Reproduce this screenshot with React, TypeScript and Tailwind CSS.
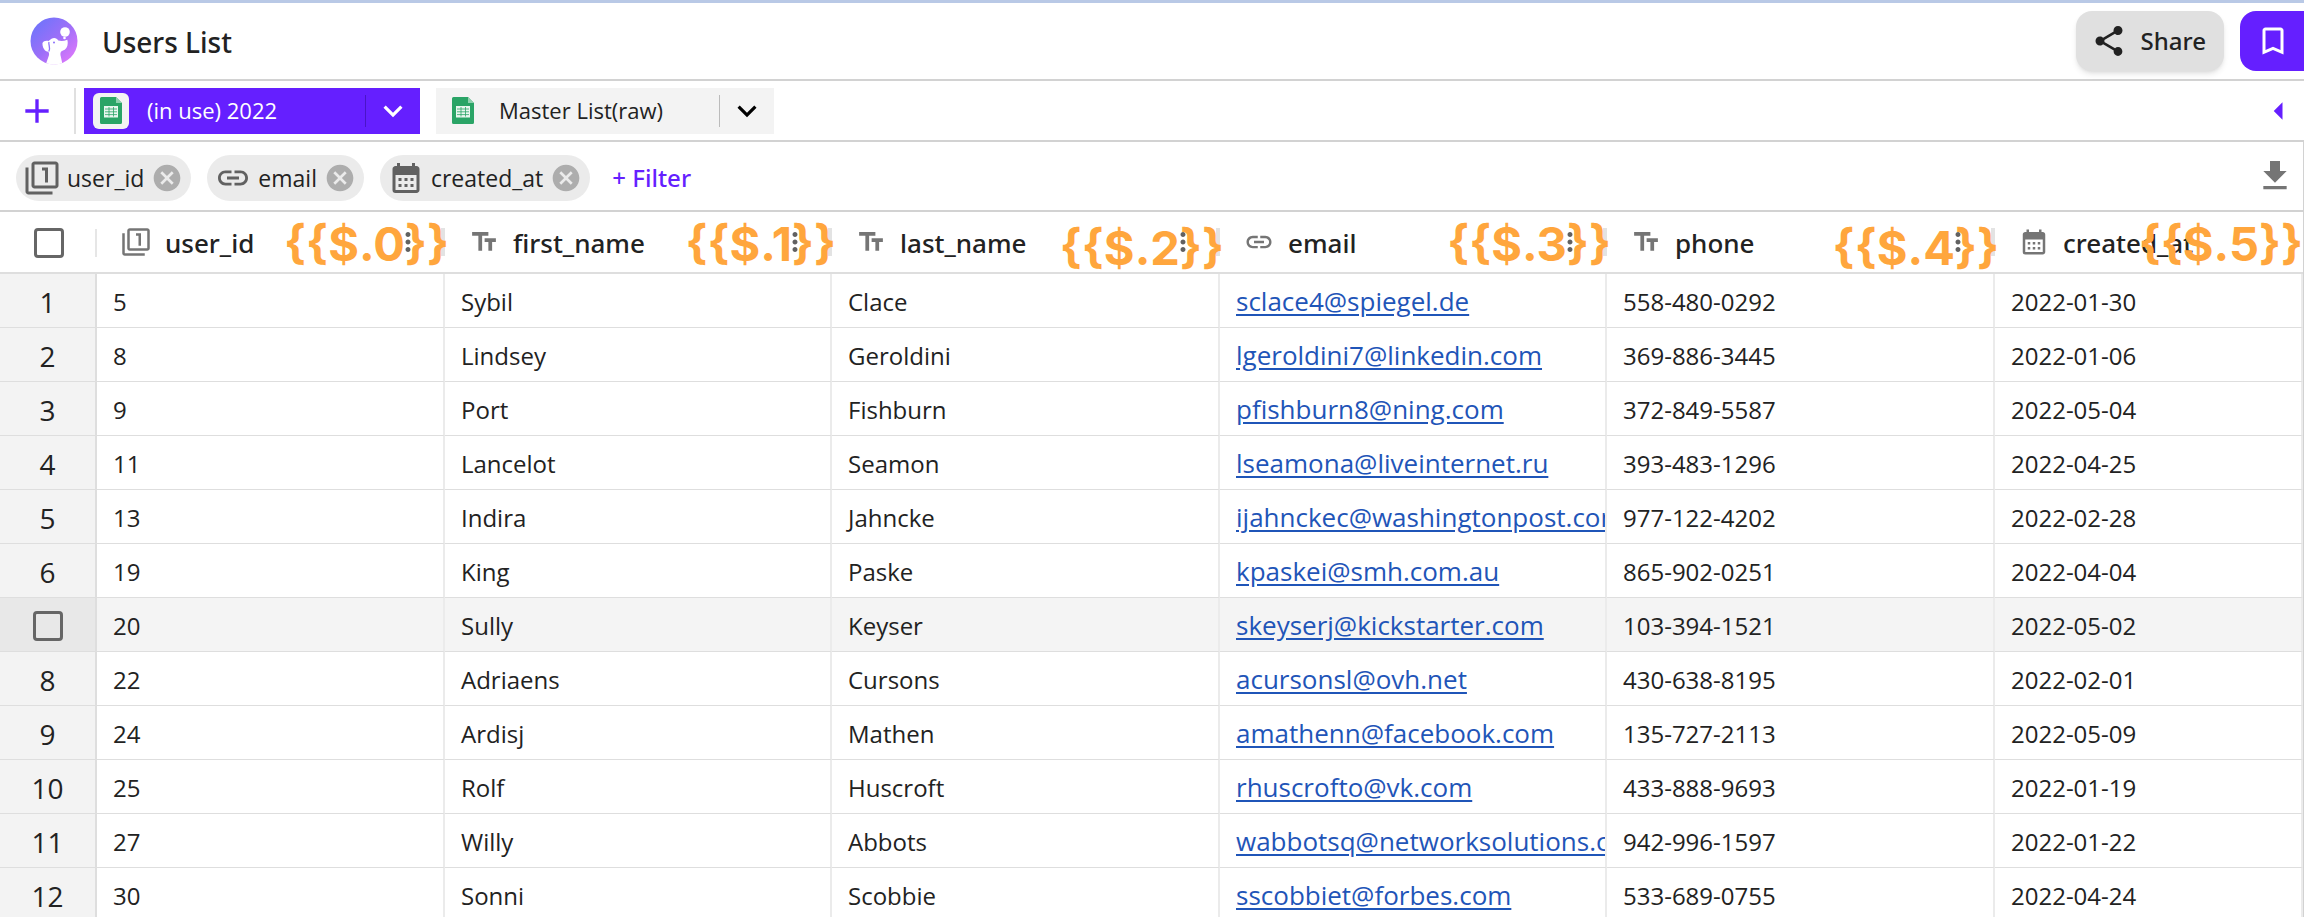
import type { ReactNode } from "react";
import type { IconType } from "react-icons";
import {
  MdAdd,
  MdArrowLeft,
  MdBookmarkBorder,
  MdCalendarMonth,
  MdCancel,
  MdExpandMore,
  MdFileDownload,
  MdFilter1,
  MdLink,
  MdMoreVert,
  MdShare,
  MdTextFields,
} from "react-icons/md";

type Column = { name: string; icon: IconType; token: string; place: string; width: string };

const columns: Column[] = [
  { name: "user_id", icon: MdFilter1, token: "{{$.0}}", place: "top-0 -right-1", width: "w-[348px]" },
  { name: "first_name", icon: MdTextFields, token: "{{$.1}}", place: "top-0 -right-1", width: "w-[387px]" },
  { name: "last_name", icon: MdTextFields, token: "{{$.2}}", place: "top-1 -right-1", width: "w-[388px]" },
  { name: "email", icon: MdLink, token: "{{$.3}}", place: "top-0 -right-1", width: "w-[387px]" },
  { name: "phone", icon: MdTextFields, token: "{{$.4}}", place: "top-1 -right-1", width: "w-[388px]" },
  { name: "created_at", icon: MdCalendarMonth, token: "{{$.5}}", place: "top-0 right-0", width: "" },
];

const rows = [
  ["5", "Sybil", "Clace", "sclace4@spiegel.de", "558-480-0292", "2022-01-30"],
  ["8", "Lindsey", "Geroldini", "lgeroldini7@linkedin.com", "369-886-3445", "2022-01-06"],
  ["9", "Port", "Fishburn", "pfishburn8@ning.com", "372-849-5587", "2022-05-04"],
  ["11", "Lancelot", "Seamon", "lseamona@liveinternet.ru", "393-483-1296", "2022-04-25"],
  ["13", "Indira", "Jahncke", "ijahnckec@washingtonpost.com", "977-122-4202", "2022-02-28"],
  ["19", "King", "Paske", "kpaskei@smh.com.au", "865-902-0251", "2022-04-04"],
  ["20", "Sully", "Keyser", "skeyserj@kickstarter.com", "103-394-1521", "2022-05-02"],
  ["22", "Adriaens", "Cursons", "acursonsl@ovh.net", "430-638-8195", "2022-02-01"],
  ["24", "Ardisj", "Mathen", "amathenn@facebook.com", "135-727-2113", "2022-05-09"],
  ["25", "Rolf", "Huscroft", "rhuscrofto@vk.com", "433-888-9693", "2022-01-19"],
  ["27", "Willy", "Abbots", "wabbotsq@networksolutions.com", "942-996-1597", "2022-01-22"],
  ["30", "Sonni", "Scobbie", "sscobbiet@forbes.com", "533-689-0755", "2022-04-24"],
];

const hoveredRow = 6;

function Logo() {
  return (
    <svg viewBox="0 0 48 48" className="size-12" aria-hidden="true">
      <defs>
        <linearGradient id="logo" x1="0.1" y1="0.1" x2="0.9" y2="0.9">
          <stop offset="0" stopColor="#6f74fb" />
          <stop offset="0.5" stopColor="#9c6ff8" />
          <stop offset="1" stopColor="#dc78fb" />
        </linearGradient>
      </defs>
      <circle cx="24" cy="24" r="23.5" fill="url(#logo)" />
      <circle cx="35" cy="15" r="4.8" fill="#fff" />
      <circle cx="34.5" cy="21" r="1.3" fill="#fff" />
      <path
        d="M12.5 26c1-2 3.5-2.800 6-2l3-2.200c2.500-1.600 5.500-.8 6.800 1.800 3 .8 6 .4 9-.8 1.400 5-.6 9.600-4.800 11-2.200.8-2.500 3-1.700 5.700l1.400 6.600c-5.200 2-11 2-16 .2l2.600-7.500c.5-1.700.3-3-.6-4-3.600-.4-6-4.800-5.700-8.800z"
        fill="#fff"
      />
      <path d="M19 25c-1 3 2 5-.2 9.500" fill="none" stroke="#8b70fa" strokeWidth="1.3" />
      <circle cx="24" cy="25.5" r="1" fill="#8b70fa" />
    </svg>
  );
}

function SheetIcon() {
  return (
    <svg viewBox="0 0 22 27" className="h-[27px] w-[22px]" aria-hidden="true">
      <path d="M1.500 0H16l6 6v19.500a1.500 1.500 0 0 1-1.500 1.500h-19A1.500 1.500 0 0 1 0 25.500v-24A1.500 1.500 0 0 1 1.500 0z" fill="#2aa466" />
      <path d="M16 0l6 6h-6z" fill="#8fd0ae" />
      <path d="M4 9h14v11.500H4z" fill="#e9f6ef" />
      <path d="M5 12h12M5 14.800h12M5 17.600h12M9 10v9.500M13.500 10v9.500" stroke="#2aa466" strokeWidth="0.8" />
    </svg>
  );
}

function Chip({ icon: Icon, children }: { icon: IconType; children: ReactNode }) {
  return (
    <div className="flex h-[46px] items-center gap-[7px] rounded-full bg-[#ebebeb] px-2 text-[23px]">
      <Icon className="size-9 text-[#616161]" />
      {children}
      <button type="button" aria-label="Remove filter" className="text-[#adadad]">
        <MdCancel className="size-8" />
      </button>
    </div>
  );
}

function RowCheckbox({ label }: { label: string }) {
  return (
    <input
      type="checkbox"
      aria-label={label}
      className="block size-[30px] appearance-none rounded-[4px] border-[3px] border-[#666]"
    />
  );
}

export default function App() {
  return (
    <div className="min-h-[917px] overflow-hidden border-t-[3px] border-[#b9c9e6] bg-white font-['Open_Sans','Noto_Sans',sans-serif] text-[#222]">
      <header className="flex h-[78px] items-center justify-between border-b-2 border-[#d2d2d2] pl-[30px]">
        <div className="flex items-center gap-6">
          <Logo />
          <h1 className="pt-0.5 font-['Noto_Sans',sans-serif] text-[28px] font-medium">Users List</h1>
        </div>
        <div className="flex items-center gap-4">
          <button type="button" className="flex h-[60px] items-center gap-3.5 rounded-2xl bg-[#e0e0e0] pr-[18px] pl-[15px] font-['Noto_Sans',sans-serif] text-2xl font-medium shadow-md">
            <MdShare className="size-9" />
            Share
          </button>
          <button type="button" aria-label="Bookmark" className="flex h-[60px] w-16 items-center rounded-l-2xl bg-[#651fff] pl-[15px] text-white">
            <MdBookmarkBorder className="size-9" />
          </button>
        </div>
      </header>

      <nav className="flex h-[61px] items-center border-b-2 border-[#d2d2d2]">
        <button type="button" aria-label="Add sheet" className="flex w-[74px] justify-center text-[#651fff]">
          <MdAdd className="size-10" />
        </button>
        <div className="mr-2 h-[46px] w-[2px] bg-[#e0e0e0]" />
        <div className="mr-4 flex h-[46px] w-[336px] items-center bg-[#651fff] text-[22px] text-white">
          <span className="ml-[9px] flex size-9 items-center justify-center rounded-md bg-[#f3f3f3]">
            <SheetIcon />
          </span>
          <span className="flex-1 pl-[18px]">(in use) 2022</span>
          <button type="button" aria-label="Options for (in use) 2022" className="flex h-8 w-[55px] items-center justify-center border-l border-[#4a14c8]">
            <MdExpandMore className="size-[38px]" />
          </button>
        </div>
        <div className="flex h-[46px] w-[338px] items-center bg-[#f3f3f3] text-[22px]">
          <span className="ml-4">
            <SheetIcon />
          </span>
          <span className="flex-1 pl-[25px]">Master List(raw)</span>
          <button type="button" aria-label="Options for Master List(raw)" className="flex h-8 w-[55px] items-center justify-center border-l border-[#bbb] text-black">
            <MdExpandMore className="size-[38px]" />
          </button>
        </div>
        <button type="button" aria-label="Show panel" className="mr-1 ml-auto text-[#651fff]">
          <MdArrowLeft className="size-[42px]" />
        </button>
      </nav>

      <section className="flex h-[70px] items-center justify-between border-r border-b-2 border-[#d2d2d2] pr-2 pl-4">
        <div className="flex items-center gap-4 pt-1">
          <Chip icon={MdFilter1}>user_id</Chip>
          <Chip icon={MdLink}>email</Chip>
          <Chip icon={MdCalendarMonth}>created_at</Chip>
          <button type="button" className="pl-1.5 font-['Noto_Sans',sans-serif] text-2xl font-medium text-[#651fff]">+ Filter</button>
        </div>
        <button type="button" aria-label="Download" className="text-[#757575]">
          <MdFileDownload className="size-10" />
        </button>
      </section>

      <table className="w-full table-fixed border-separate border-spacing-0 border-r border-[#d2d2d2] text-left">
        <thead>
          <tr className="h-[62px]">
            <th className="w-[97px] border-b-2 border-[#dedede] p-0">
              <div className="flex items-center justify-between pt-0.5 pl-[34px]">
                <RowCheckbox label="Select all rows" />
                <span className="h-7 w-[2px] bg-[#e6e6e6]" />
              </div>
            </th>
            {columns.map(({ name, icon: Icon, token, place, width }, i) => (
              <th key={name} className={`relative border-b-2 border-[#dedede] p-0 ${width}`}>
                <div className="flex items-center gap-3.5 pl-6">
                  <Icon className="size-[30px] text-[#757575]" />
                  <span className="pt-0.5 font-['Noto_Sans',sans-serif] text-[26px] font-medium">{name}</span>
                  {i < 5 && (
                    <div className="ml-auto flex items-center gap-[18px]">
                      <MdMoreVert className="size-[30px] text-[#616161]" />
                      <span className="h-7 w-1 bg-[#e3e3e3]" />
                    </div>
                  )}
                </div>
                <span
                  className={`absolute font-['Inter',sans-serif] text-[47px] leading-[64px] font-bold text-[#ffa63d] ${place}`}
                >
                  {token}
                </span>
              </th>
            ))}
          </tr>
        </thead>
        <tbody>
          {rows.map((row, r) => {
            const hovered = r === hoveredRow;
            return (
              <tr key={row[0]} className={hovered ? "h-[54px] bg-[#f4f4f4]" : "h-[54px]"}>
                <th
                  scope="row"
                  className={`border-r-2 border-b border-[#dedede] px-0 pt-0.5 pb-0 text-center text-[28px] leading-[50px] font-normal ${hovered ? "bg-[#e8e8e8]" : "bg-[#f3f3f3]"}`}
                >
                  {hovered ? (
                    <span className="flex justify-center">
                      <RowCheckbox label="Select row 7" />
                    </span>
                  ) : (
                    r + 1
                  )}
                </th>
                {row.map((value, c) => (
                  <td
                    key={c}
                    className="overflow-hidden border-r-2 border-b border-r-[#ebebeb] border-b-[#dedede] pt-0.5 pr-0 pb-0 pl-4 text-2xl leading-[50px] whitespace-nowrap"
                  >
                    {c === 3 ? (
                      <a href={`mailto:${value}`} className="text-[26px] text-[#1f55b8] underline underline-offset-3">
                        {value}
                      </a>
                    ) : (
                      value
                    )}
                  </td>
                ))}
              </tr>
            );
          })}
        </tbody>
      </table>
    </div>
  );
}
